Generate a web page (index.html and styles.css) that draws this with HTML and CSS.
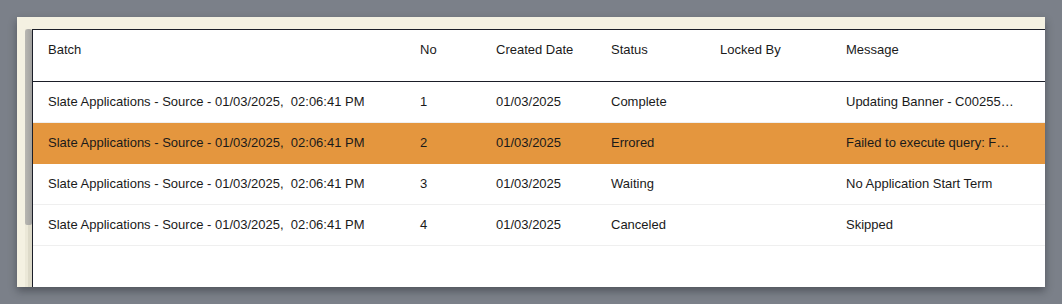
FILE: index.html
```html
<!DOCTYPE html>
<html lang="en">
<head>
    <meta charset="UTF-8">
    <meta name="viewport" content="width=device-width, initial-scale=1.0">
    <title>Batch Queue</title>
    <link rel="stylesheet" href="styles.css">
</head>
<body>
    <div class="panel">
        <div class="scrollbar">
            <div class="thumb"></div>
        </div>
        <div class="grid-wrap">
            <table class="grid">
                <colgroup>
                    <col class="c-batch">
                    <col class="c-no">
                    <col class="c-date">
                    <col class="c-status">
                    <col class="c-locked">
                    <col class="c-msg">
                </colgroup>
                <thead>
                    <tr>
                        <th>Batch</th>
                        <th>No</th>
                        <th>Created Date</th>
                        <th>Status</th>
                        <th>Locked By</th>
                        <th>Message</th>
                    </tr>
                </thead>
                <tbody>
                    <tr>
                        <td>Slate Applications - Source - 01/03/2025,&nbsp; 02:06:41 PM</td>
                        <td>1</td>
                        <td>01/03/2025</td>
                        <td>Complete</td>
                        <td></td>
                        <td><span class="msg" title="Updating Banner - C00255871 - Application 4">Updating Banner - C00255871 - Application 4</span></td>
                    </tr>
                    <tr class="selected">
                        <td>Slate Applications - Source - 01/03/2025,&nbsp; 02:06:41 PM</td>
                        <td>2</td>
                        <td>01/03/2025</td>
                        <td>Errored</td>
                        <td></td>
                        <td><span class="msg" title="Failed to execute query: FOREIGN KEY">Failed to execute query: FOREIGN KEY</span></td>
                    </tr>
                    <tr>
                        <td>Slate Applications - Source - 01/03/2025,&nbsp; 02:06:41 PM</td>
                        <td>3</td>
                        <td>01/03/2025</td>
                        <td>Waiting</td>
                        <td></td>
                        <td><span class="msg">No Application Start Term</span></td>
                    </tr>
                    <tr>
                        <td>Slate Applications - Source - 01/03/2025,&nbsp; 02:06:41 PM</td>
                        <td>4</td>
                        <td>01/03/2025</td>
                        <td>Canceled</td>
                        <td></td>
                        <td><span class="msg">Skipped</span></td>
                    </tr>
                </tbody>
            </table>
        </div>
    </div>
</body>
</html>
```

FILE: styles.css
```css
body {
    margin: 0;
    height: 304px;
    background-color: #7b8089;
    font-family: "Liberation Sans", Arial, sans-serif;
    font-size: 13px;
    color: #1a1a1a;
    overflow: hidden;
}
.panel {
    display: flex;
    margin: 17px 0 0 17px;
    width: 1028px;
    height: 270px;
    padding: 12px 0 0 8px;
    box-sizing: border-box;
    background-color: #f4f1e2;
    box-shadow: 0 4px 8px rgba(30, 33, 40, 0.45);
}
.scrollbar {
    width: 7px;
    background: linear-gradient(to right, #ebe8d8 0, #ebe8d8 3px, #dddac9 3px);
}
.thumb {
    height: 196px;
    border-radius: 3px 3px 2px 2px;
    background: linear-gradient(to right, #b8b7b2, #a1a19f);
}
.grid-wrap {
    flex: 1;
    background-color: #fff;
    border-top: 1px solid #1b1e28;
    border-left: 1px solid #1b1e28;
}
.grid {
    width: 100%;
    border-collapse: collapse;
    table-layout: fixed;
}
.c-batch { width: 372px; }
.c-no { width: 76px; }
.c-date { width: 115px; }
.c-status { width: 109px; }
.c-locked { width: 126px; }
th, td {
    padding: 0 15px;
    text-align: left;
    font-weight: normal;
    line-height: 16px;
    white-space: nowrap;
}
th {
    height: 51px;
    padding-top: 12px;
    box-sizing: border-box;
    vertical-align: top;
    border-bottom: 1px solid #1b1e28;
}
td {
    height: 40px;
    border-bottom: 1px solid #efefef;
}
.msg {
    display: block;
    max-width: 170px;
    overflow: hidden;
    text-overflow: ellipsis;
}
.selected td {
    background-color: #e4963e;
    border-bottom-color: #e4963e;
}
```
